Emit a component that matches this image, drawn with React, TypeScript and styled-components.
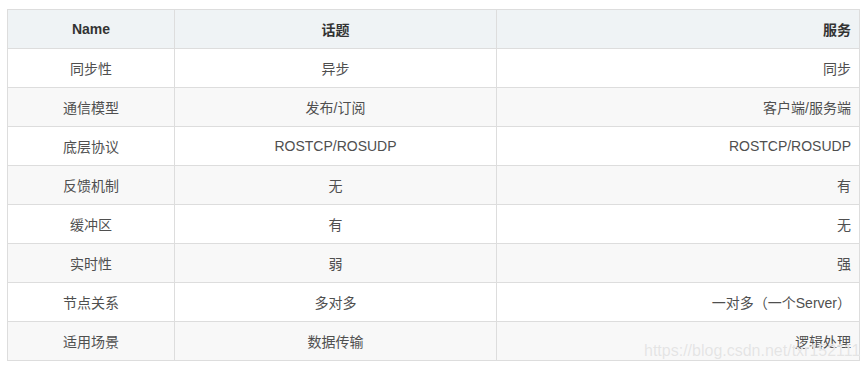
import React from "react";
import styled, { createGlobalStyle } from "styled-components";

const Global = createGlobalStyle`
  html, body { margin: 0; padding: 0; background: #fff; }
  body { font-family: "Liberation Sans", "Noto Sans CJK SC", sans-serif; }
`;

const Page = styled.div`
  position: relative;
  padding: 9px 0 0 7px;
  width: 867px;
  height: 370px;
  box-sizing: border-box;
`;

const Table = styled.table`
  border-collapse: collapse;
  table-layout: fixed;
  width: 852px;
  font-size: 14px;
  color: #4f4f4f;
`;

const Th = styled.th<{ $align: string; $w: number }>`
  width: ${(p) => p.$w}px;
  height: 39px;
  padding: 0 8px;
  box-sizing: border-box;
  border: 1px solid #dddddd;
  background: #eff3f5;
  color: #333;
  font-weight: bold;
  text-align: ${(p) => p.$align};
`;

const Row = styled.tr<{ $even: boolean }>`
  background: ${(p) => (p.$even ? "#f8f8f8" : "#ffffff")};
`;

const Td = styled.td<{ $align: string }>`
  height: 39px;
  padding: 0 8px;
  box-sizing: border-box;
  border: 1px solid #dddddd;
  text-align: ${(p) => p.$align};
`;

const Watermark = styled.div`
  position: absolute;
  left: 644px;
  top: 343px;
  font-family: "Liberation Sans", sans-serif;
  font-size: 16px;
  line-height: 16px;
  color: rgba(225, 225, 225, 0.9);
  text-shadow: 0 0 1px #fff;
  white-space: nowrap;
  pointer-events: none;
`;

const cols = [
  { name: "Name", align: "center", w: 167 },
  { name: "话题", align: "center", w: 322 },
  { name: "服务", align: "right", w: 363 },
];

const rows = [
  ["同步性", "异步", "同步"],
  ["通信模型", "发布/订阅", "客户端/服务端"],
  ["底层协议", "ROSTCP/ROSUDP", "ROSTCP/ROSUDP"],
  ["反馈机制", "无", "有"],
  ["缓冲区", "有", "无"],
  ["实时性", "弱", "强"],
  ["节点关系", "多对多", "一对多（一个Server）"],
  ["适用场景", "数据传输", "逻辑处理"],
];

export default function App() {
  return (
    <>
      <Global />
      <Page>
        <Table>
          <thead>
            <tr>
              {cols.map((c) => (
                <Th key={c.name} $align={c.align} $w={c.w}>
                  {c.name}
                </Th>
              ))}
            </tr>
          </thead>
          <tbody>
            {rows.map((r, i) => (
              <Row key={i} $even={i % 2 === 1}>
                {r.map((cell, j) => (
                  <Td key={j} $align={cols[j].align}>
                    {cell}
                  </Td>
                ))}
              </Row>
            ))}
          </tbody>
        </Table>
        <Watermark>https://blog.csdn.net/txr152111</Watermark>
      </Page>
    </>
  );
}
